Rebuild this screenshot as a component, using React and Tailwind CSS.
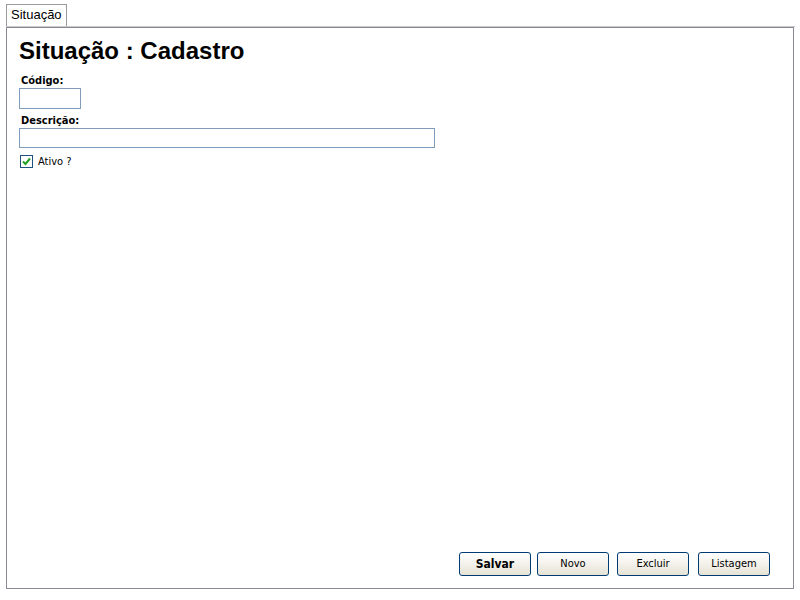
export default function App() {
  const buttons = [
    { label: 'Salvar', bold: true, cls: '' },
    { label: 'Novo', cls: '' },
    { label: 'Excluir', cls: 'ml-[2px]' },
    { label: 'Listagem', cls: 'ml-[3px]' },
  ]

  return (
    <div className="w-[800px] h-[600px] bg-white pt-[5px] pl-[6px] pr-[5px] flex flex-col font-['Liberation_Sans',Arial,sans-serif]">
      {/* tab strip */}
      <div className="flex items-end border-b border-[#c8c8c8] h-[22px]">
        <div className="h-[22px] px-[4px] border border-b-0 border-[#9a9a9a] bg-white text-[13px] leading-[20px] text-black">
          Situação
        </div>
      </div>

      {/* panel */}
      <div className="w-[788px] h-[562px] border border-[#8a8a92] flex flex-col px-[12px] pt-[9px] pb-[12px]">
        <h1 className="text-[24px] font-bold leading-[28px] text-black">Situação : Cadastro</h1>

        <div className="mt-[9px] flex flex-col font-['DejaVu_Sans_Condensed','DejaVu_Sans',sans-serif] text-[11px] text-black">
          <label className="font-bold leading-[13px] pl-[2px]">Código:</label>
          <input className="mt-[1px] w-[62px] h-[21px] border border-[#7f9db9] outline-none" />

          <label className="mt-[5px] font-bold leading-[13px] pl-[2px]">Descrição:</label>
          <input className="mt-[1px] w-[416px] h-[20px] border border-[#7f9db9] outline-none" />

          <div className="mt-[7px] flex items-center gap-[5px] pl-[1px]">
            <span className="w-[13px] h-[13px] border border-[#1c5180] bg-white flex items-center justify-center">
              <svg width="9" height="9" viewBox="0 0 9 9">
                <path d="M1 4.5 L3.5 7 L8 1.5" stroke="#21a121" strokeWidth="2" fill="none" />
              </svg>
            </span>
            <span className="leading-[13px]">Ativo ?</span>
          </div>
        </div>

        <div className="mt-auto flex justify-end gap-[6px] pr-[11px] font-['DejaVu_Sans_Condensed','DejaVu_Sans',sans-serif] text-[11px]">
          {buttons.map(({ label, bold, cls }) => (
            <button
              key={label}
              className={`w-[72px] h-[24px] rounded-[3px] border border-[#003c74] bg-gradient-to-b from-white to-[#e6e3d6] text-black ${
                bold ? 'font-bold text-[12px]' : ''
              } ${cls}`}
            >
              {label}
            </button>
          ))}
        </div>
      </div>
    </div>
  )
}
